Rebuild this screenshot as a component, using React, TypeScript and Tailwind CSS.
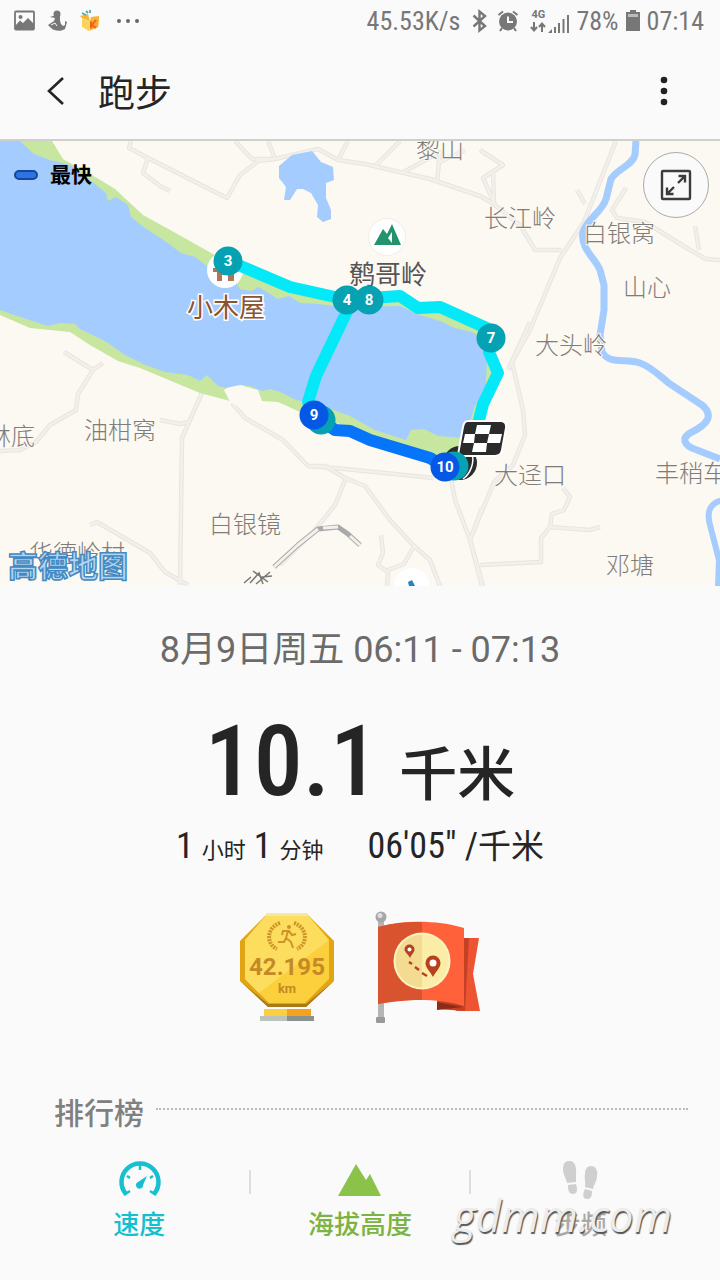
import type { ReactNode } from "react";

const sans = "font-[Roboto,'Noto_Sans_CJK_SC',sans-serif]";
const condensed = "font-['Roboto_Condensed',Roboto,'Noto_Sans_CJK_SC',sans-serif]";

const roads = [
  "M131 141 L129 148 L148 158 L143 173 L160 186 L170 191",
  "M148 158 L227 198 L240 175 L258 161 L275 159 L318 149 L338 160 L365 164 L430 179 L480 196 L492 203 L520 225 L535 250 L562 250",
  "M235 141 L252 159 L275 159 L268 141 M338 160 L348 141 M375 166 L400 141 M402 173 L440 152 L437 182 M440 162 L465 150",
  "M480 150 L503 165 L483 178 L495 205 M493 172 L494 205",
  "M616 141 L584 222 L560 258 L530 330 L512 362 L523 410 L525 435 L513 465 L494 482 L470 540 L482 586",
  "M530 322 L508 370 M577 190 L585 204 M626 188 L612 210 L617 218 L645 222 L690 250 L706 259 L720 260 M695 226 L699 250",
  "M64 352 L93 370 L103 363 M93 370 L78 394 L76 410 L50 425 L36 442 L20 450 L0 451",
  "M202 393 L182 438 L180 585 M160 420 L180 424 L188 422",
  "M90 525 L97 522 L150 553 L165 572 L188 585",
  "M232 403 L245 418 L283 440 L308 466 L345 469 L434 478",
  "M308 466 L325 466 L345 478 L365 486 L390 520 L414 546 L430 560 L440 586",
  "M346 478 L335 505 L315 530 L280 565",
  "M381 535 L383 553 L378 565 L388 572 L387 586 M388 570 L404 564 L414 546",
  "M451 478 L455 500 L470 540 L483 586 M472 535 L482 508",
  "M563 488 L570 497 L564 510 L552 514 L550 527 L541 538 L541 562 L480 565 M550 527 L590 530 L600 527",
];

const labels = [
  { text: "黎山", x: 416, y: 158 },
  { text: "长江岭", x: 484, y: 227 },
  { text: "白银窝", x: 583, y: 242 },
  { text: "山心", x: 623, y: 296 },
  { text: "大头岭", x: 535, y: 354 },
  { text: "油柑窝", x: 84, y: 439 },
  { text: "林底", x: -13, y: 445 },
  { text: "白银镜", x: 209, y: 533 },
  { text: "华德岭村", x: 29, y: 562 },
  { text: "大迳口", x: 494, y: 484 },
  { text: "丰稍车", x: 655, y: 482 },
  { text: "邓塘", x: 606, y: 574 },
];

const pins = [
  { label: "3", x: 228, y: 261, color: "#05a2b4" },
  { label: "4", x: 347, y: 300, color: "#05a2b4" },
  { label: "8", x: 369, y: 300, color: "#05a2b4" },
  { label: "7", x: 491, y: 338, color: "#05a2b4" },
  { label: "", x: 321, y: 420, color: "#05a2b4" },
  { label: "9", x: 314, y: 415, color: "#0558e6" },
  { label: "", x: 454, y: 466, color: "#05a2b4" },
  { label: "10", x: 445, y: 467, color: "#0558e6" },
];

function StatusBar() {
  return (
    <div className={`flex h-[42px] items-center justify-between pr-4 pl-3 text-[#777] ${condensed}`}>
      <div className="flex items-center gap-3">
        <svg className="h-6 w-6" viewBox="0 0 24 24">
          <rect x="3" y="2.5" width="19" height="18" rx="1" fill="none" stroke="#777" strokeWidth="1.8" />
          <circle cx="8.5" cy="8" r="2" fill="#777" />
          <path d="M3 17 L8 11.5 L11 14 L16 9 L22 15 V20 H3 Z" fill="#777" />
        </svg>
        <svg className="h-6 w-5" viewBox="0 0 20 24">
          <circle cx="9" cy="5" r="3.5" fill="#777" />
          <path d="M2 8 L8 6 L12 7 V12 L13 15 L15 17 L17 16 L17 12 L19 13 L17 20 C13 23 6 22 3 19 L0 16 L6 12 L7 9 Z" fill="#777" />
          <path d="M3 16 L7 14 L9 17" fill="none" stroke="#fafafa" strokeWidth="1" />
        </svg>
        <svg className="h-6 w-5" viewBox="0 0 20 24">
          <path d="M2 9 L10 12 L19 8 L18 18 L9 22 L2 18 Z" fill="#fcd35b" />
          <path d="M10 12 L19 8 L18 18 L10 21 Z" fill="#fba42d" />
          <path d="M0 7 L8 5 L10 12 L2 9 Z M11 8 L19 7 L19 10 L10 12 Z" fill="#f6b436" />
          <path d="M11 12.5 V19 M16 11 L12 16 L16 19" stroke="#ef641c" strokeWidth="2" fill="none" />
          <path d="M2 4 L6 6 M6 2 L8 4 M10 1 L10 4" stroke="#4aa9bb" strokeWidth="1.8" fill="none" />
        </svg>
        <svg className="ml-1 h-6 w-7" viewBox="0 0 28 24" fill="#666">
          <circle cx="3" cy="12" r="2" />
          <circle cx="12" cy="12" r="2" />
          <circle cx="21" cy="12" r="2" />
        </svg>
      </div>
      <div className="flex items-center gap-1.5 text-[26px] leading-8">
        <span>45.53K/s</span>
        <svg className="ml-1 h-6 w-5" viewBox="0 0 20 24" fill="none" stroke="#777" strokeWidth="2.4">
          <path d="M3.5 6.5 L15 17 L9.5 21.5 V2.5 L15 7 L3.5 17.5" />
        </svg>
        <svg className="h-6 w-6" viewBox="0 0 24 24">
          <circle cx="12" cy="12.5" r="9" fill="#777" />
          <path d="M2.5 6 L7 2.5 M21.5 6 L17 2.5 M6 19 L4 22 M18 19 L20 22" stroke="#777" strokeWidth="2" />
          <path d="M12 7.5 V13 H17" fill="none" stroke="#fafafa" strokeWidth="2" />
        </svg>
        <div className="ml-1 flex items-end gap-0.5">
          <div className="flex w-4 flex-col items-center">
            <span className="font-[Roboto,sans-serif] text-[11px] leading-3 font-bold">4G</span>
            <svg className="h-3 w-4" viewBox="0 0 16 12" fill="none" stroke="#777" strokeWidth="2">
              <path d="M4 1 V9 M1 6 L4 9.5 L7 6 M12 11 V3 M9 6 L12 2.5 L15 6" />
            </svg>
          </div>
          <svg className="h-5 w-[22px]" viewBox="0 0 22 20" fill="#777">
            <path d="M0 20 L4 16 V20 Z M6 14 H8 V20 H6 Z M10 10 H12 V20 H10 Z M14.5 6 H16.5 V20 H14.5 Z M19 2 H21 V20 H19 Z" />
          </svg>
        </div>
        <span>78%</span>
        <svg className="h-6 w-4" viewBox="0 0 16 24">
          <path d="M5 1 H11 V3 H15 V22 H1 V3 H5 Z" fill="#777" />
          <path d="M3 5 H13 V8 H3 Z" fill="#bbb" />
        </svg>
        <span>07:14</span>
      </div>
    </div>
  );
}

function Header() {
  return (
    <header className="flex h-[99px] items-center border-b-2 border-[#cfcfcb] px-9">
      <button type="button" aria-label="返回" className="flex h-12 w-10 items-center justify-center">
        <svg className="h-8 w-8" viewBox="0 0 32 32" fill="none" stroke="#252525" strokeWidth="2.6">
          <path d="M23 3 L9 16 L23 29" />
        </svg>
      </button>
      <h1 className="mt-2 ml-[22px] text-[37px] leading-[48px] text-[#252525]">跑步</h1>
      <button type="button" aria-label="更多" className="ml-auto flex h-12 w-10 items-center justify-center">
        <svg className="h-8 w-8" viewBox="0 0 32 32" fill="#222">
          <circle cx="16" cy="5" r="3.3" />
          <circle cx="16" cy="16" r="3.3" />
          <circle cx="16" cy="27" r="3.3" />
        </svg>
      </button>
    </header>
  );
}

function RouteMap() {
  return (
    <section className="relative">
      <svg className="block w-full" viewBox="0 141 720 445">
        <rect x="0" y="141" width="720" height="445" fill="#fcf8f2" />

        {/* roads */}
        <g fill="none" strokeLinejoin="round">
          {roads.map((d) => (
            <path key={d} d={d} stroke="#e8e5e0" strokeWidth="4.5" />
          ))}
          {roads.map((d) => (
            <path key={d} d={d} stroke="#f3f0eb" strokeWidth="2.5" />
          ))}
          <path d="M274 567 L298 545 L318 529 L338 527 L348 534 L360 545" stroke="#aaa" strokeWidth="5" />
          <path d="M274 567 L298 545 L318 529" stroke="#f3f1ec" strokeWidth="3" />
          <path d="M323 528 L338 527 M350 536 L360 545" stroke="#f3f1ec" strokeWidth="3" />
        </g>

        {/* river banks and water */}
        <path
          d="M20 141 L52 141 L63 159 L97 178 L115 189 L143 215 L172 231 L213 254 L243 272 L290 292 L335 300 L400 300 L440 313 L483 332 L496 358 L488 400 L470 452 L440 458 L400 448 L345 425 L320 420 L300 412 L278 402 L262 401 L258 390 L240 385 L228 388 L230 401 L200 393 L140 368 L118 361 L90 345 L70 332 L30 328 L0 315 V141 Z"
          fill="#c7e69f"
        />
        <path d="M262 402 L255 392 L240 384 L228 387 L224 390 L230 402 L245 410 Z" fill="#fcf8f2" />
        <path
          d="M0 141 L20 141 L34 154 L50 160 L70 165 L95 184 L106 193 L108 201 L116 197 L128 205 L131 217 L145 228 L165 241 L181 253 L195 257 L207 266 L233 278 L240 289 L252 291 L258 287 L270 294 L278 299 L289 296 L300 303 L318 304 L345 307 L400 306 L420 315 L440 321 L455 328 L475 333 L487 352 L486 385 L474 408 L466 438 L438 436 L424 429 L411 430 L406 440 L375 430 L350 416 L320 405 L296 400 L280 392 L270 389 L262 391 L250 386 L240 385 L226 388 L218 386 L207 375 L200 381 L188 375 L165 372 L143 364 L125 355 L105 341 L80 329 L75 324 L60 323 L48 326 L20 317 L0 310 Z"
          fill="#a4ccff"
        />
        <path
          d="M279 166 L292 155 L312 151 L321 162 L333 167 L334 180 L326 183 L326 198 L331 210 L331 219 L323 222 L317 217 L318 205 L311 193 L303 189 L297 189 L290 200 L284 200 L286 187 L279 178 Z"
          fill="#a4ccff"
        />
        <path
          d="M636 141 L635 155 C632 166 618 168 611 179 L606 199 C602 212 587 219 583 232 C580 248 595 258 600 270 L604 285 L604 310 L600 335 L602 352 C610 365 625 358 640 363 C650 366 660 376 670 384 L702 405 C715 416 706 425 692 432 C680 438 684 446 697 450 L720 459"
          fill="none"
          stroke="#a4ccff"
          strokeWidth="7"
        />
        <path d="M724 500 C711 502 706 510 710 525 L719 560 L718 586" fill="none" stroke="#a4ccff" strokeWidth="6" />

        {/* village names */}
        <g
          className="font-['Noto_Sans_CJK_SC',sans-serif] font-light"
          fontSize="24"
          fill="#7f7c79"
          stroke="#fcf8f2"
          strokeWidth="2"
          paintOrder="stroke"
        >
          {labels.map((l) => (
            <text key={l.text} x={l.x} y={l.y}>
              {l.text}
            </text>
          ))}
        </g>
        <path
          d="M244 583 L251 577 M250 583 L259 573 L263 584 M253 571 L268 582 M270 572 L256 584 M262 577 L272 576"
          stroke="#777"
          strokeWidth="1.5"
          fill="none"
        />

        {/* points of interest */}
        <circle cx="225" cy="270" r="18" fill="#fff" />
        <path d="M213 268 H237 V272 H234 V281 H228 V275 H222 V281 H217 V272 H213 Z" fill="#ad7659" />
        <circle cx="387" cy="237" r="18.5" fill="#fff" stroke="#f1ede7" />
        <path d="M374 245 L383 229 L387 234 L392 224 L401 245 Z" fill="#22936b" />
        <path d="M392 232 L388 238 L392 243 Z" fill="#fff" />
        <text
          x="187"
          y="317"
          fontSize="26"
          fill="#8b5330"
          stroke="#fff"
          strokeWidth="3"
          paintOrder="stroke"
          className="font-['Noto_Sans_CJK_SC',sans-serif]"
        >
          小木屋
        </text>
        <text
          x="349"
          y="284"
          fontSize="26"
          fill="#555"
          stroke="#fcf8f2"
          strokeWidth="2"
          paintOrder="stroke"
          className="font-['Noto_Sans_CJK_SC',sans-serif]"
        >
          鹩哥岭
        </text>
        <path d="M394 586 A18 18 0 0 1 430 586 Z" fill="#fff" />
        <path d="M408 582 L412 580 L415 586 H409 Z" fill="#2a83bd" />

        {/* running track */}
        <g fill="none" strokeWidth="12" strokeLinejoin="round">
          <path
            d="M228 261 L243 267 L290 287 L335 297 L370 298 L400 296 L418 308 L440 307 L491 330 L489 352 L498 373 L483 404 L477 428"
            stroke="#05e8f8"
          />
          <path d="M350 305 L316 376 L308 402 L314 415" stroke="#05e8f8" />
          <path d="M321 420 L335 430 L350 431 L370 440 L430 458 L450 470" stroke="#0675fa" />
        </g>

        {/* finish flag */}
        <circle cx="460" cy="463" r="17" fill="#2b2b2b" />
        <path d="M472 453 C475 463 470 474 463 479" stroke="#fff" strokeWidth="1.5" fill="none" />
        <path
          d="M468 421 H500 Q507 421 506 428 L502 450 Q501 456 495 456 H463 Q457 456 459 449 L463 427 Q464 421 468 421 Z"
          fill="#2b2b2b"
          stroke="#fff"
          strokeWidth="2"
        />
        <path
          d="M477 425 H491 L489 434 H475 Z M465 434 H475 L474 443 H463 Z M489 434 H502 L500 443 H487 Z M474 443 H487 L486 452 H472 Z"
          fill="#fff"
        />

        {pins.map((p) => (
          <g key={`${p.x}-${p.y}`}>
            <circle cx={p.x} cy={p.y} r="14.5" fill={p.color} />
            <text
              x={p.x}
              y={p.y + 5}
              textAnchor="middle"
              fontSize="15"
              fill="#fff"
              className="font-[Roboto,sans-serif] font-bold"
            >
              {p.label}
            </text>
          </g>
        ))}

        {/* map provider */}
        <text
          x="8"
          y="577"
          fontSize="30"
          fill="#b4d5ee"
          stroke="#4389c4"
          strokeWidth="1.5"
          className="font-['Noto_Sans_CJK_SC',sans-serif] font-bold"
        >
          高德地图
        </text>
      </svg>

      <div className="absolute top-5 left-3.5 flex items-center gap-3">
        <span className="h-2.5 w-6 rounded-full border-2 border-[#17479b] bg-[#2b74e2]" />
        <span className="text-[21px] leading-7 font-bold text-black">最快</span>
      </div>
      <button
        type="button"
        aria-label="全屏"
        className="absolute top-[11px] right-[11px] flex h-[66px] w-[66px] items-center justify-center rounded-full border border-[#aaa] bg-[#fafafa]"
      >
        <svg className="h-8 w-8" viewBox="0 0 32 32" fill="none" stroke="#3c3c3c" strokeWidth="2.4">
          <rect x="2" y="2" width="28" height="28" rx="1" />
          <path d="M18 14 L25 7 M18.5 7 H25 V13.5 M14 18 L7 25 M7 18.5 V25 H13.5" />
        </svg>
      </button>
    </section>
  );
}

function Summary() {
  return (
    <section className={`flex flex-col items-center text-[#252525] ${condensed}`}>
      <p className={`mt-10 text-[36px] leading-[48px] text-[#6b6b6b] ${sans}`}>8月9日周五 06:11 - 07:13</p>
      <p className="mt-9 flex items-baseline gap-5 text-[98px] leading-[104px] font-medium">
        10.1<span className="text-[58px] leading-[60px]">千米</span>
      </p>
      <div className="mt-2 flex items-baseline gap-11 text-[36px] leading-[48px]">
        <p className="flex items-baseline gap-2">
          1<span className="text-[22px]">小时</span>
          1<span className="text-[22px]">分钟</span>
        </p>
        <p>
          06'05" /<span className="text-[33px]">千米</span>
        </p>
      </div>
    </section>
  );
}

function Medal() {
  return (
    <svg className="h-28 w-24" viewBox="0 0 96 112">
      <path d="M29 2 H67 L95 30 V70 L67 96 H29 L1 70 V30 Z" fill="#e3a414" />
      <path d="M1 70 L29 96 H67 L95 70 L67 93 H29 Z" fill="#a87a1a" />
      <path d="M29 2 H67 L90 29 V68 L66 92 H30 L6 68 V29 Z" fill="#fbd03c" />
      <path d="M29 2 H67 L90 29 L20 82 L6 68 V29 Z" fill="#fddd5d" />
      <path d="M29 2 H67 L70 5 H26 Z" fill="#f7e7a0" />
      <g fill="none" stroke="#cf9328">
        <path d="M41 12 C27 17 27 33 38 38 M55 12 C69 17 69 33 58 38" strokeWidth="4" strokeDasharray="2 1" />
        <path d="M49 20 L47 27 L52 31 L54 37 M47 27 L45 31 H39 M43 24 L44 20 L50 20 L53 24 L57 23" strokeWidth="2" />
      </g>
      <circle cx="50" cy="16" r="2" fill="#cf9328" />
      <text x="48" y="64" textAnchor="middle" fontSize="24" fill="#c58a25" className="font-[Roboto,sans-serif] font-bold">
        42.195
      </text>
      <text x="48" y="82" textAnchor="middle" fontSize="13" fill="#c58a25" className="font-[Roboto,sans-serif] font-bold">
        km
      </text>
      <path d="M25 98 H48 V105 H25 Z" fill="#fbcf42" />
      <path d="M48 98 H72 V105 H48 Z" fill="#f5a21e" />
      <path d="M21 105 H48 V110 H21 Z" fill="#bcc3bb" />
      <path d="M48 105 H75 V110 H48 Z" fill="#8b918c" />
    </svg>
  );
}

function FlagBadge() {
  return (
    <svg className="h-28 w-[106px]" viewBox="0 0 106 112">
      <rect x="3" y="8" width="6" height="98" fill="#b5b5b5" />
      <circle cx="6" cy="6" r="5.5" fill="#a7a7a7" />
      <circle cx="5" cy="4.5" r="2.5" fill="#dedede" />
      <rect x="1" y="106" width="9" height="6" rx="1" fill="#999" />
      <path d="M88 27 H104 L98 63 L105 100 L82 100 L62 90 Z" fill="#ee5332" />
      <path d="M88 27 L94 27 L90 100 L62 98 V90 H88 Z" fill="#c54124" />
      <path d="M62 91 L88 96 L62 99 Z" fill="#8d2c16" />
      <path d="M3 16 C28 9 62 9 89 17 V95 C64 87 28 88 3 93 Z" fill="#ff623b" />
      <path d="M3 16 C18 12 32 11 47 11 V89 C30 89 16 91 3 93 Z" fill="#d9532e" />
      <circle cx="47" cy="50" r="28.5" fill="#fbf3bf" />
      <path d="M47 23.5 A26.5 26.5 0 0 0 47 76.5 Z" fill="#f3dc91" />
      <path d="M47 23.5 A26.5 26.5 0 0 1 47 76.5 Z" fill="#fbeda7" />
      <path d="M35 47 C33 43 29.5 41 29.5 38.5 A5 5 0 0 1 39.5 38.5 C39.5 41 37 43 35 47 Z" fill="#b7401d" />
      <circle cx="34.5" cy="38.5" r="2" fill="#fff" />
      <path d="M58 66 C55 60 50.5 57 50.5 52 A7.5 7.5 0 0 1 65.5 52 C65.5 57 61 60 58 66 Z" fill="#b7401d" />
      <circle cx="58" cy="52" r="3.5" fill="#fff" />
      <path d="M34 51 L37 53 M40 56 L44 59 M47 62 L52 65" stroke="#b7401d" strokeWidth="2.5" />
    </svg>
  );
}

function RankItem({ label, color, children }: { label: string; color: string; children: ReactNode }) {
  return (
    <button type="button" className="flex flex-1 flex-col items-center gap-1">
      {children}
      <span className={`text-[26px] leading-9 font-medium ${color}`}>{label}</span>
    </button>
  );
}

function Ranking() {
  return (
    <section className="relative mt-[66px]">
      <div className="flex items-center gap-3 pr-8 pl-[54px]">
        <h2 className="text-[30px] leading-[50px] font-medium text-[#808080]">排行榜</h2>
        <div className="mb-2.5 flex-1 border-t-2 border-dotted border-[#bbb]" />
      </div>
      <div className="mt-4 flex items-start px-[30px]">
        <RankItem label="速度" color="text-[#14bfd0]">
          <svg className="h-12 w-12" viewBox="0 0 48 48">
            <path d="M11 39 A18.5 18.5 0 1 1 39 39" fill="none" stroke="#16c0d0" strokeWidth="4.5" />
            <path d="M25 10 V15 M12 21 L15 23 M38 21 L35 23 M9 40 L15 36 M41 40 L35 36" stroke="#16c0d0" strokeWidth="2.5" />
            <path d="M32 21 L28 30 A3.5 3.5 0 1 1 23 27 Z" fill="#14bfd0" />
          </svg>
        </RankItem>
        <span className="mt-[15px] h-6 w-0.5 bg-[#dedede]" />
        <RankItem label="海拔高度" color="text-[#7cb342]">
          <svg className="h-12 w-12" viewBox="0 0 48 48">
            <path d="M2 41 L20 9 L30 25 L34 19 L45 41 Z" fill="#8bc34a" />
          </svg>
        </RankItem>
        <span className="mt-[15px] h-6 w-0.5 bg-[#dedede]" />
        <RankItem label="步频" color="text-[#aaa]">
          <svg className="h-12 w-12" viewBox="0 0 48 48" fill="#cfcfcf">
            <path d="M12 6 C18 5 20 13 19 19 L19 27 L10 28 C9 22 6 20 6 14 C6 9 8 6 12 6 Z M11 30 L19 29 C21 35 20 39 16 39 C12 39 11 36 11 30 Z" />
            <path d="M34 11 C39 11 41 16 40 21 C40 26 37 29 36 34 L28 32 C29 26 27 24 28 19 C28 14 30 11 34 11 Z M28 34 L35 36 C35 41 34 44 30 44 C26 44 25 40 28 34 Z" />
          </svg>
        </RankItem>
      </div>
      <span className="absolute right-12 bottom-0 font-['Open_Sans',sans-serif] text-[44px] leading-[56px] italic text-[#ececec] [text-shadow:1px_2px_1px_#555]">
        gdmm.com
      </span>
    </section>
  );
}

export default function App() {
  return (
    <div className={`min-h-screen overflow-hidden bg-[#fafafa] ${sans}`}>
      <StatusBar />
      <Header />
      <RouteMap />
      <Summary />
      <div className="mt-9 flex items-start justify-center gap-10">
        <Medal />
        <FlagBadge />
      </div>
      <Ranking />
    </div>
  );
}
